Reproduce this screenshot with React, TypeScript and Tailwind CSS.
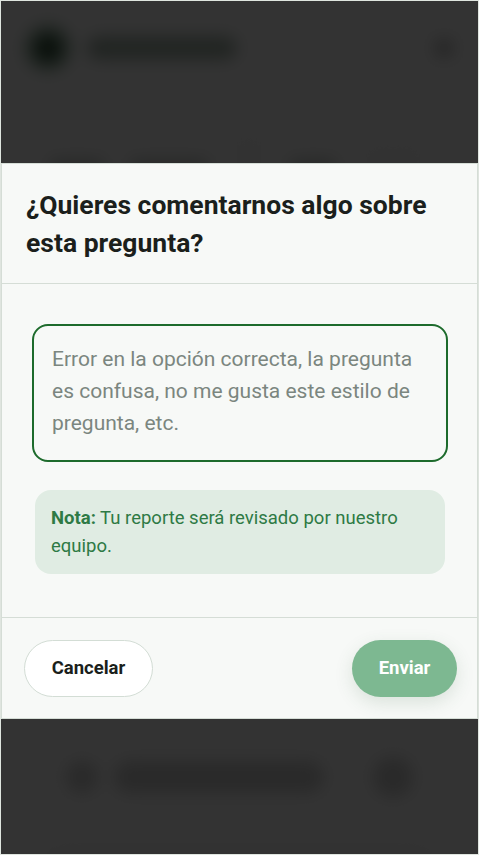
import { useState } from "react"

export default function App() {
  const [text, setText] = useState("")

  return (
    <div className="relative h-[855px] w-[479px] overflow-hidden border border-[#dfe5df] bg-white font-['Roboto',sans-serif]">
      {/* Page behind the dialog, blurred */}
      <div className="flex h-full flex-col blur-[8px]">
        <header className="flex items-center gap-4 px-6 pt-6 pb-4">
          <div className="flex h-[46px] w-[46px] items-center justify-center rounded-full bg-[#8fae98]">
            <div className="h-6 w-6 rounded-full bg-[#2c4a35]" />
          </div>
          <div className="h-6 w-[150px] rounded-full bg-[#a9b8ad]" />
          <div className="ml-auto h-5 w-5 rounded-full bg-[#bdbdbd]" />
        </header>
        <div className="mt-12 flex items-end gap-6 px-12">
          <div className="h-4 w-14 rounded-full bg-[#c9cfcb]" />
          <div className="h-4 w-20 rounded-full bg-[#c9cfcb]" />
          <div className="h-10 w-8 rounded-md bg-[#fafafa]" />
          <div className="h-4 w-12 rounded-full bg-[#c9cfcb]" />
          <div className="h-8 w-16 rounded-full bg-[#fafafa]" />
        </div>
        <div className="mt-auto mb-[-40px] px-10">
          <div className="flex items-center gap-4 rounded-3xl border border-[#f2f2f2] px-6 py-8">
            <div className="h-8 w-8 rounded-full bg-[#cfcfcf]" />
            <div className="h-8 w-[210px] rounded-full bg-[#cfcfcf]" />
            <div className="ml-auto h-10 w-10 rounded-full bg-[#cfcfcf]" />
          </div>
          <div className="mt-4 h-12 rounded-3xl bg-[#f6f6f6]" />
        </div>
      </div>

      {/* Overlay */}
      <div className="absolute inset-0 bg-black/80" />

      {/* Dialog */}
      <div className="absolute top-[162px] right-0 left-0 border border-[#d5ddd6] bg-[#f7f9f7]">
        <div className="border-b border-[#d5ddd6] px-6 pt-[22px] pb-[21px]">
          <h2 className="text-[26.5px] leading-[38px] font-bold text-[#1b1f1c]">
            ¿Quieres comentarnos algo sobre esta pregunta?
          </h2>
        </div>

        <div className="flex flex-col gap-7 pt-10 pr-[29px] pb-[43px] pl-[30px]">
          <textarea
            value={text}
            onChange={(e) => setText(e.target.value)}
            rows={3}
            placeholder="Error en la opción correcta, la pregunta es confusa, no me gusta este estilo de pregunta, etc."
            className="h-[138px] w-full resize-none rounded-2xl border-2 border-[#1d6b2c] bg-[#f7f9f7] px-[18px] pt-[17px] text-[21px] leading-[32px] text-[#1b1f1c] outline-none placeholder:text-[#7b867f]"
          />
          <div className="mx-[3px] rounded-2xl bg-[#e0ece3] px-4 py-[14px] text-[18.5px] leading-[28px] text-[#2e7a45]">
            <span className="font-bold">Nota:</span> Tu reporte será revisado por nuestro equipo.
          </div>
        </div>

        <div className="flex items-center justify-between border-t border-[#d5ddd6] pt-[22px] pr-5 pb-[21px] pl-[22px]">
          <button className="h-[57px] w-[129px] rounded-full border border-[#d3ddd5] bg-white text-[18.5px] font-bold text-[#1b1f1c]">
            Cancelar
          </button>
          <button className="h-[57px] w-[105px] rounded-full bg-[#7db891] text-[18.5px] font-bold text-white shadow-[0_6px_18px_rgba(60,100,70,0.15)]">
            Enviar
          </button>
        </div>
      </div>
    </div>
  )
}
